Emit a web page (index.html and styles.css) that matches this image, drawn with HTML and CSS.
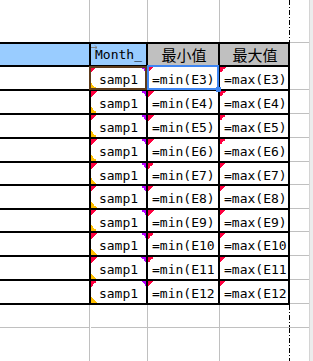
FILE: index.html
```html
<!DOCTYPE html>
<html>
<head>
<meta charset="utf-8">
<link rel="stylesheet" href="styles.css">
</head>
<body>
<div class="sheet">
  <div class="row r-top">
    <div class="c a gl"></div><div class="c b gl0"></div><div class="c cc gl0"></div><div class="c d dash"></div><div class="c e"></div><div class="c f"></div>
  </div>
  <div class="row r-head">
    <div class="c a t head-blue"></div>
    <div class="c b t head-blue center"><svg class="cursor" width="6" height="5" viewBox="0 0 6 5"><path d="M0 2.5H6M4 0.5L6 2.5L4 4.5" fill="none" stroke="#808080" stroke-width="1"/></svg>Month_</div>
    <div class="c cc t head-gray cjk">最小值</div>
    <div class="c d t head-gray cjk">最大值</div>
    <div class="c e eh"></div><div class="c f"></div>
  </div>
  <div class="row h24">
    <div class="c a t"></div><div class="c b t center marks sel-brown">samp1</div><div class="c cc t txt red sel-blue">=min(E3)<span class="handle"></span></div><div class="c d t txt red">=max(E3)</div><div class="c e et"></div><div class="c f"></div>
  </div>
  <div class="row h24">
    <div class="c a t"></div><div class="c b t center marks">samp1</div><div class="c cc t txt red">=min(E4)</div><div class="c d t txt red">=max(E4)</div><div class="c e et"></div><div class="c f"></div>
  </div>
  <div class="row h24">
    <div class="c a t"></div><div class="c b t center marks">samp1</div><div class="c cc t txt red">=min(E5)</div><div class="c d t txt red">=max(E5)</div><div class="c e et"></div><div class="c f"></div>
  </div>
  <div class="row h24">
    <div class="c a t"></div><div class="c b t center marks">samp1</div><div class="c cc t txt red">=min(E6)</div><div class="c d t txt red">=max(E6)</div><div class="c e et"></div><div class="c f"></div>
  </div>
  <div class="row h23">
    <div class="c a t"></div><div class="c b t center marks">samp1</div><div class="c cc t txt red">=min(E7)</div><div class="c d t txt red">=max(E7)</div><div class="c e et"></div><div class="c f"></div>
  </div>
  <div class="row h24">
    <div class="c a t"></div><div class="c b t center marks">samp1</div><div class="c cc t txt red">=min(E8)</div><div class="c d t txt red">=max(E8)</div><div class="c e et"></div><div class="c f"></div>
  </div>
  <div class="row h23">
    <div class="c a t"></div><div class="c b t center marks">samp1</div><div class="c cc t txt red">=min(E9)</div><div class="c d t txt red">=max(E9)</div><div class="c e et"></div><div class="c f"></div>
  </div>
  <div class="row h24">
    <div class="c a t"></div><div class="c b t center marks">samp1</div><div class="c cc t txt red">=min(E10</div><div class="c d t txt red">=max(E10</div><div class="c e et"></div><div class="c f"></div>
  </div>
  <div class="row h24">
    <div class="c a t"></div><div class="c b t center marks">samp1</div><div class="c cc t txt red">=min(E11</div><div class="c d t txt red">=max(E11</div><div class="c e et"></div><div class="c f"></div>
  </div>
  <div class="row h24">
    <div class="c a t"></div><div class="c b t center marks">samp1</div><div class="c cc t txt red">=min(E12</div><div class="c d t txt red">=max(E12</div><div class="c e et"></div><div class="c f"></div>
  </div>
  <div class="row r-after">
    <div class="c a gl gb"></div><div class="c b gl0 gb"></div><div class="c cc gl0 gb"></div><div class="c d dash gb"></div><div class="c e gb"></div><div class="c f"></div>
  </div>
  <div class="row r-last">
    <div class="c a gl"></div><div class="c b gl0"></div><div class="c cc gl0"></div><div class="c d dash"></div><div class="c e"></div><div class="c f"></div>
  </div>
</div>
</body>
</html>
```

FILE: styles.css
```css
html, body {
  margin: 0;
  padding: 0;
  background: #ffffff;
}

.sheet {
  width: 313px;
  height: 361px;
  overflow: hidden;
  font-family: "DejaVu Sans Mono", "Liberation Mono", monospace;
  font-size: 13px;
  color: #000;
}

.row {
  display: grid;
  grid-template-columns: 91px 57px 72px 70px 19px 4px;
}

.r-top { height: 42px; }
.r-head { height: 25px; }
.h24 { height: 24px; }
.h23 { height: 23px; }
.r-after { height: 23px; }
.r-last { height: 33px; }

.c {
  box-sizing: border-box;
  min-width: 0;
  position: relative;
}

/* non-table grid lines */
.gl {
  border-right: 1px solid #c0c0c0;
  margin-right: 1px;
}
.gl0 {
  border-right: 1px solid #c0c0c0;
}
.gb {
  border-bottom: 1px solid #c0c0c0;
}
.dash {
  background-image: repeating-linear-gradient(to bottom, #000 0 5px, transparent 5px 7px, #000 7px 8px, transparent 8px 10px);
  background-size: 1px 100%;
  background-position: right top;
  background-repeat: no-repeat;
}

/* table cells */
.t {
  border-right: 2px solid #000;
  border-bottom: 2px solid #000;
}
.r-head .t {
  border-top: 2px solid #000;
}
.head-blue { background-color: #99ccff; }
.head-gray { background-color: #c0c0c0; }

.center, .txt, .cjk {
  display: flex;
  align-items: center;
  white-space: nowrap;
  overflow: hidden;
}
.center {
  justify-content: center;
  padding-top: 3px;
}
.txt {
  padding-left: 4px;
  padding-top: 3px;
}
.cjk {
  justify-content: center;
  font-family: "Noto Sans CJK SC", sans-serif;
  font-size: 15px;
  padding-left: 2px;
}
.r-head .center {
  padding-top: 0;
}

.cursor {
  position: absolute;
  left: 0;
  top: 1px;
}

/* corner markers */
.marks {
  background:
    linear-gradient(135deg, #ff0040 50%, transparent 50%) left top / 6px 6px no-repeat,
    linear-gradient(45deg, #ffbf00 50%, transparent 50%) left bottom / 6px 6px no-repeat,
    linear-gradient(225deg, #b400ff 50%, transparent 50%) right top / 5px 5px no-repeat;
}
.red {
  background: linear-gradient(135deg, #ff0040 50%, transparent 50%) left top / 6px 6px no-repeat;
}

/* column E / F */
.eh {
  border-top: 1px solid #c0c0c0;
}
.et {
  border-bottom: 1px solid #c0c0c0;
  margin-bottom: 1px;
}
.f {
  background: #ececec;
  border-left: 1px solid #d4d4d4;
}

/* selections */
.sel-brown {
  overflow: visible;
}
.sel-brown::after {
  content: "";
  position: absolute;
  left: -2px;
  top: -1px;
  right: -1px;
  bottom: -1px;
  border: 2px solid #5c3b1c;
  pointer-events: none;
}
.sel-blue {
  overflow: visible;
}
.sel-blue::after {
  content: "";
  position: absolute;
  left: -1px;
  top: -2px;
  right: -1px;
  bottom: -1px;
  border: 2px solid #3f86f2;
  pointer-events: none;
}
.handle {
  position: absolute;
  right: -3px;
  bottom: -3px;
  width: 5px;
  height: 5px;
  background: #3f86f2;
  z-index: 2;
}
```
